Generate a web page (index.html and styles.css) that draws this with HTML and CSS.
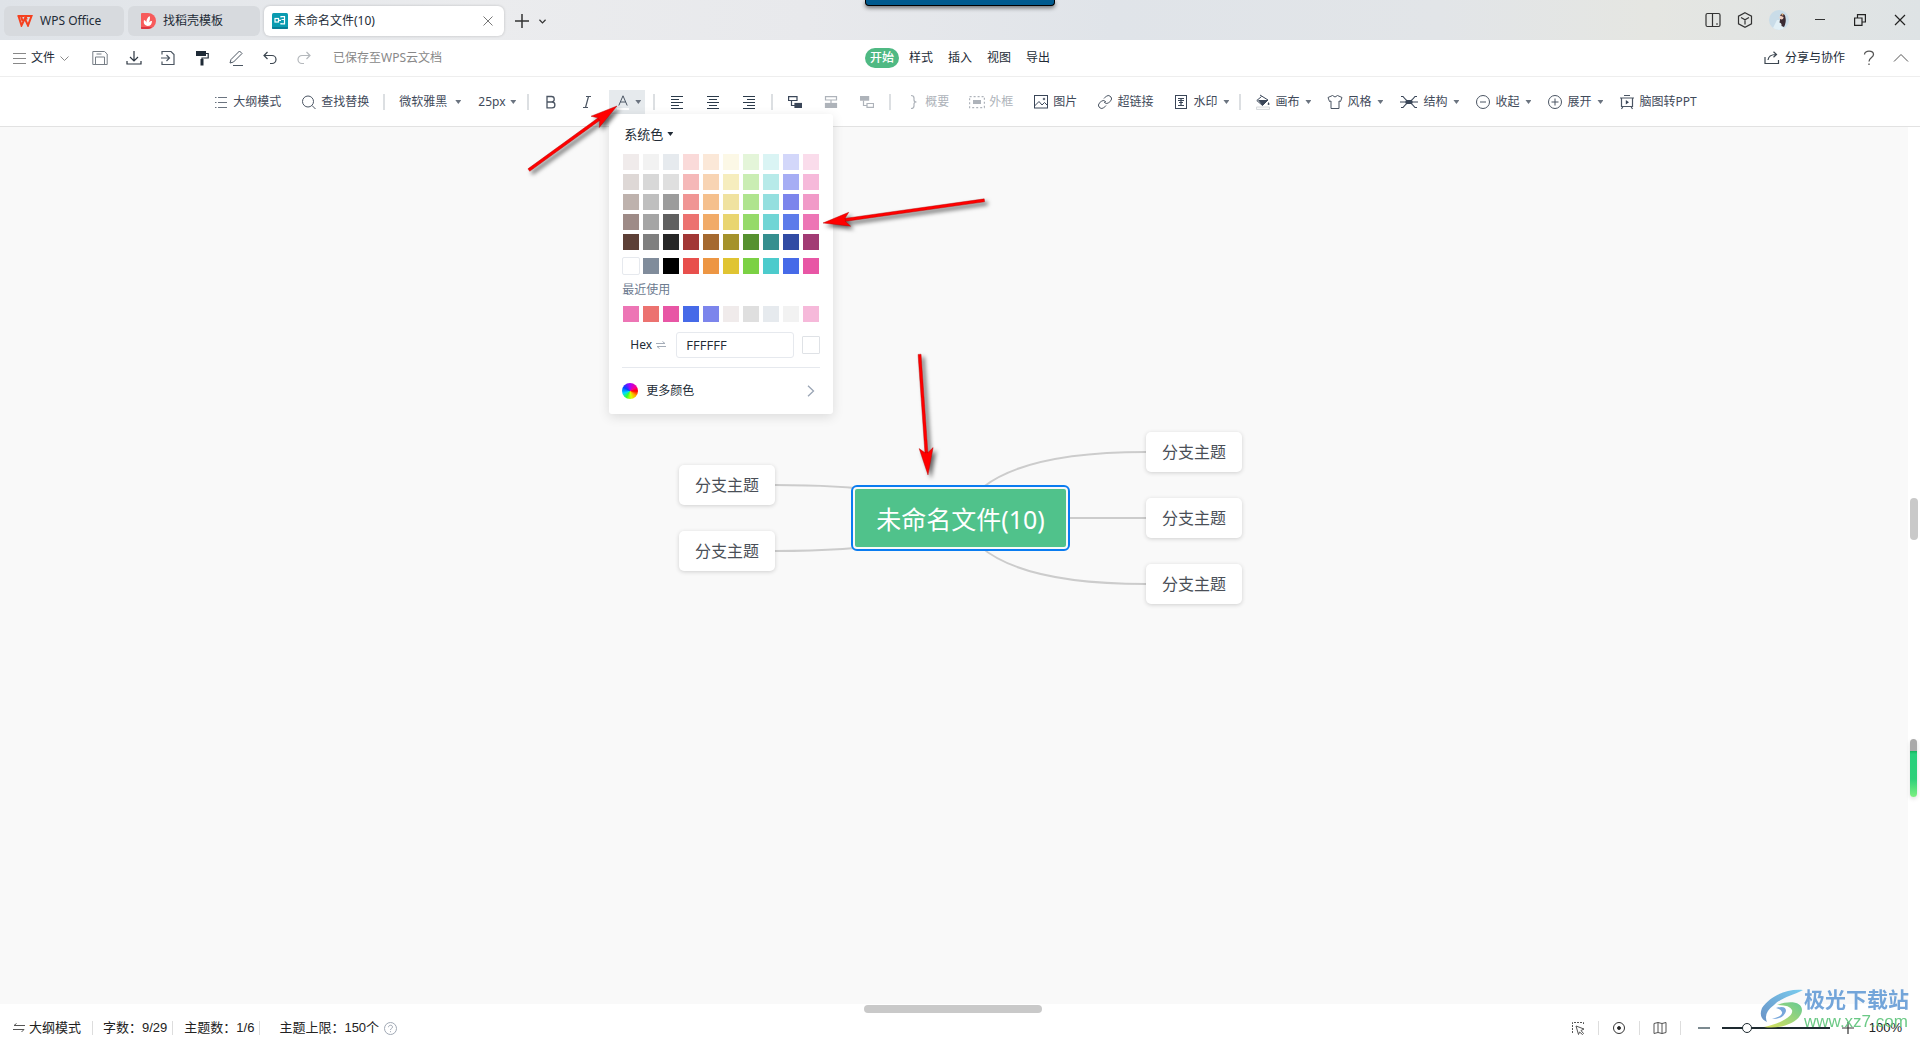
FILE: index.html
```html
<!DOCTYPE html>
<html lang="zh-CN">
<head>
<meta charset="utf-8">
<title>未命名文件(10) - WPS Office</title>
<link rel="stylesheet" href="styles.css">
</head>
<body>
<div class="app">
  <header class="titlebar">
    <div class="tabs">
      <button class="tab tab-home">
        <svg width="16" height="12" viewBox="0 0 16 12" fill="none" stroke="#f5401f" stroke-width="2"><path d="M0.5 1H7.5M1.500 1L4.500 10.500L7.800 3.500L11 10.500L14.500 1H8.500L9.800 4.500M4 1L5.500 6"/></svg>
        WPS Office
      </button>
      <button class="tab tab-template">
        <svg width="15" height="16" viewBox="0 0 15 16"><path d="M1 0H7A8 8 0 0 1 7 16H1Q0 16 0 15V1Q0 0 1 0Z" fill="#f75b5b"/><path d="M0 14H11Q9 16 7 16H1Q0 16 0 15Z" fill="#dc3540"/><path d="M6.500 13C2.500 12 2.500 9 3 7C4.500 7.500 5.500 8.500 5.500 10C5 7 6.500 4.500 8.500 3C9.500 5 9 7.500 7.500 10C8.500 8.500 9.500 8 11 8C11 11 9.500 13 6.500 13Z" fill="#fff"/></svg>
        找稻壳模板
      </button>
      <button class="tab tab-file active">
        <svg width="16" height="16" viewBox="0 0 16 16"><rect width="16" height="16" rx="1.500" fill="#0a9bb0"/><path d="M0 14H16V15Q16 16 15 16H1Q0 16 0 15Z" fill="#087d96"/><g fill="none" stroke="#fff" stroke-width="1.200"><rect x="3" y="5.500" width="3.500" height="3.500"/><path d="M6.500 7.300H9M9 3.600H12.500V6.500H9.500M9 10.800H12.500V6.500M9 3V4.500M9 10V11.500"/></g></svg>
        <span class="tab-name">未命名文件(10)</span>
        <svg width="10" height="10" viewBox="0 0 10 10" stroke="#777" fill="none"><path d="M.5.5L9.500 9.500M9.500.5L.5 9.500"/></svg>
      </button>
      <button class="new-tab" aria-label="新建">
        <svg width="14" height="14" viewBox="0 0 14 14" stroke="#333" stroke-width="1.500"><path d="M7 0V14M0 7H14"/></svg>
      </button>
      <button class="tab-list" aria-label="标签列表">
        <svg width="7" height="5" viewBox="0 0 8 5" stroke="#333" stroke-width="1.400" fill="none"><path d="M.5.5L4 4L7.500.5"/></svg>
      </button>
    </div>
    <div class="window-tools">
      <button class="win-btn" aria-label="分屏"><svg width="16" height="16" viewBox="0 0 16 16" fill="none" stroke="#333" stroke-width="1.200"><rect x="1" y="1.500" width="14" height="13" rx="1.500"/><path d="M7.500 1.500V14.500M11 12H13"/></svg></button>
      <button class="win-btn" aria-label="应用"><svg width="16" height="16" viewBox="0 0 16 16" fill="none" stroke="#333" stroke-width="1.200"><path d="M8 .8L14.500 4.200V11.800L8 15.200L1.500 11.800V4.200ZM4 5.500L8 7.700L12 5.500M8 7.700V12.500"/></svg></button>
      <button class="win-btn user" aria-label="账号"><svg width="20" height="20" viewBox="0 0 20 20"><defs><clipPath id="face"><circle cx="10" cy="10" r="10"/></clipPath></defs><g clip-path="url(#face)"><rect width="20" height="20" fill="#c9dce8"/><path d="M3 20L8 10L12 10L15 20Z" fill="#e2f0f6"/><path d="M12 4Q16 3 16.500 8Q17.500 12 15 17L12.500 16Q13 13 10.500 12.500Z" fill="#3a2b33"/><circle cx="12.500" cy="7.500" r="2" fill="#f0cfc0"/><path d="M11 5.500Q13 3 15.500 5.500L14.500 7Z" fill="#4a343a"/><circle cx="13.500" cy="4.500" r="1" fill="#e5b078"/></g></svg></button>
      <button class="win-btn wide" aria-label="最小化"><svg width="12" height="12" viewBox="0 0 12 12" stroke="#333"><path d="M1 5.500H11"/></svg></button>
      <button class="win-btn wide" aria-label="还原"><svg width="12" height="12" viewBox="0 0 12 12" fill="none" stroke="#222" stroke-width="1.200"><path d="M.6 4H8V11.400H.6ZM3.500 4V.6H11.400V8H8"/></svg></button>
      <button class="win-btn wide" aria-label="关闭"><svg width="12" height="12" viewBox="0 0 12 12" stroke="#222" stroke-width="1.200"><path d="M1 1L11 11M11 1L1 11"/></svg></button>
    </div>
    <div class="dock"></div>
  </header>

  <nav class="menubar">
    <div class="quick">
      <button class="file-menu">
        <svg width="13" height="12" viewBox="0 0 13 12" stroke="#888"><path d="M0 1.500H13M0 6.500H13M0 11.500H13"/></svg>
        文件
        <svg width="9" height="5" viewBox="0 0 9 5" stroke="#888" fill="none"><path d="M.5.5L4.500 4.500L8.500.5"/></svg>
      </button>
      <button class="quick-btn" aria-label="保存"><svg width="16" height="16" viewBox="0 0 16 16" fill="none" stroke="#777e86"><path d="M.8 1.500H12.500L15.200 4V14.500H.8ZM3.500 14.500V7H12.500V14.500M4.500 4H9.500"/></svg></button>
      <button class="quick-btn" aria-label="下载"><svg width="16" height="16" viewBox="0 0 16 16" fill="none" stroke="#2b3540" stroke-width="1.200"><path d="M8 1V10.500M4 7L8 11L12 7M1 11V14H15V11"/></svg></button>
      <button class="quick-btn" aria-label="导出"><svg width="16" height="16" viewBox="0 0 16 16" fill="none" stroke="#4c5662" stroke-width="1.200"><path d="M2 4.500V1.500H11L14 4.500V14.500H2V11.500M1 8H9M6.500 5L9.500 8L6.500 11"/></svg></button>
      <button class="quick-btn" aria-label="格式刷"><svg width="16" height="16" viewBox="0 0 16 16"><path d="M2 1H12V6H2Z" fill="#1e2a36"/><path d="M12 3.500H14.200V8H8V10" fill="none" stroke="#1e2a36" stroke-width="1.200"/><rect x="6.500" y="9" width="3" height="6.500" fill="#1e2a36"/></svg></button>
      <button class="quick-btn" aria-label="画笔"><svg width="16" height="16" viewBox="0 0 16 16" fill="none" stroke="#4c5662"><path d="M2 13L3 9.500L11.500 1L14 3.500L5.500 12L2 13M5 15.500H15"/></svg></button>
      <button class="quick-btn" aria-label="撤销"><svg width="14" height="14" viewBox="0 0 14 14" fill="none" stroke="#3c4650" stroke-width="1.200"><path d="M4.500 1L1 4.500L4.500 8M1 4.500H9A4 4 0 0 1 9 12.500H7"/></svg></button>
      <button class="quick-btn" aria-label="重做"><svg width="14" height="14" viewBox="0 0 14 14" fill="none" stroke="#b4b8bc" stroke-width="1.200"><path d="M9.500 1L13 4.500L9.500 8M13 4.500H5A4 4 0 0 0 5 12.500H7"/></svg></button>
      <span class="saved">已保存至WPS云文档</span>
    </div>
    <div class="sections">
      <button class="section current">开始</button>
      <button class="section">样式</button>
      <button class="section">插入</button>
      <button class="section">视图</button>
      <button class="section">导出</button>
    </div>
    <div class="share-area">
      <button class="share"><svg width="16" height="14" viewBox="0 0 16 14" fill="none" stroke="#3c4650" stroke-width="1.200"><path d="M1 6V12.500H14.500V9M4 9C4.500 5 7 3.500 12 3.500M9.500 .8L12.500 3.500L9.500 6.200"/></svg>分享与协作</button>
      <button class="share-icon" aria-label="帮助"><svg width="12" height="16" viewBox="0 0 12 16" fill="none" stroke="#555" stroke-width="1.300"><path d="M1.500 4.500C1.500 0 10.500 0 10.500 4.500C10.500 7.500 6 7.500 6 11.500M6 13.500V15"/></svg></button>
      <button class="share-icon fold" aria-label="收起功能区"><svg width="16" height="10" viewBox="0 0 16 10" fill="none" stroke="#555"><path d="M1 8.500L8 1.500L15 8.500"/></svg></button>
    </div>
  </nav>

  <div class="toolbar">
    <button class="tool"><svg width="16" height="16" viewBox="0 0 16 16" stroke="#6b7480"><path d="M5 3.500H14M5 8.500H14M5 13.500H14M2 3.500H3.500M2 8.500H3.500M2 13.500H3.500"/></svg>大纲模式</button>
    <button class="tool"><svg width="16" height="16" viewBox="0 0 16 16" fill="none" stroke="#4b5563"><circle cx="7" cy="7.500" r="5.500"/><path d="M11 11.500L14.500 15"/></svg>查找替换</button>
    <span class="rule"></span>
    <span class="pick"><select class="pick-font" aria-label="字体"><option>微软雅黑</option></select><i class="caret"></i></span>
    <span class="pick"><select class="pick-size" aria-label="字号"><option>25px</option></select><i class="caret"></i></span>
    <span class="rule"></span>
    <button class="icon-tool" aria-label="加粗"><svg width="16" height="16" viewBox="0 0 16 16" fill="none" stroke="#4b5563" stroke-width="1.300"><path d="M4 2.500H8.500A2.700 2.700 0 0 1 8.500 8H4ZM4 8H9A2.900 2.900 0 0 1 9 13.800H4Z"/></svg></button>
    <button class="icon-tool" aria-label="斜体"><svg width="16" height="16" viewBox="0 0 16 16" fill="none" stroke="#4b5563" stroke-width="1.200"><path d="M7 2.500H12M4 13.500H9M9.500 2.500L6.500 13.500"/></svg></button>
    <div class="color-tool">
      <button class="color-btn" aria-label="字体颜色"><span class="letter"><svg width="10" height="11" viewBox="0 0 10 11" fill="none" stroke="#4b5563"><path d="M.8 10.500L5 .8L9.200 10.500M2.300 7H7.700"/></svg></span><i class="caret"></i></button>
      <section class="palette">
        <button class="palette-head">系统色<i class="caret dark"></i></button>
        <div class="swatches">
          <button style="background:#f0ebeb"></button><button style="background:#f2f2f2"></button><button style="background:#e6eaee"></button><button style="background:#fadad9"></button><button style="background:#fbe8d8"></button><button style="background:#fcf8e6"></button><button style="background:#e4f5d9"></button><button style="background:#daf4f4"></button><button style="background:#d3d7fa"></button><button style="background:#fadceb"></button>
          <button style="background:#ded8d6"></button><button style="background:#d8d8d8"></button><button style="background:#dfdfdf"></button><button style="background:#f5b8b8"></button><button style="background:#f8d4b3"></button><button style="background:#f6edbe"></button><button style="background:#caedb3"></button><button style="background:#b7eae9"></button><button style="background:#a6adf4"></button><button style="background:#f6b9da"></button>
          <button style="background:#beb2ad"></button><button style="background:#bfbfbf"></button><button style="background:#9c9c9c"></button><button style="background:#f09594"></button><button style="background:#f5c08d"></button><button style="background:#f0e2a0"></button><button style="background:#afe48e"></button><button style="background:#94dfdf"></button><button style="background:#7c85ec"></button><button style="background:#f19ac8"></button>
          <button style="background:#9e8b87"></button><button style="background:#a5a5a5"></button><button style="background:#606060"></button><button style="background:#ec7270"></button><button style="background:#f1ab68"></button><button style="background:#e9d570"></button><button style="background:#95da69"></button><button style="background:#70d5d5"></button><button style="background:#5d7bea"></button><button style="background:#ed75b5"></button>
          <button style="background:#5d4037"></button><button style="background:#7f7f7f"></button><button style="background:#262626"></button><button style="background:#a23735"></button><button style="background:#a5692f"></button><button style="background:#a5922b"></button><button style="background:#56912f"></button><button style="background:#358f8f"></button><button style="background:#314ba4"></button><button style="background:#a23b74"></button>
        </div>
        <div class="swatches standard">
          <button class="white"></button><button style="background:#808c9b"></button><button style="background:#000"></button><button style="background:#e84f4c"></button><button style="background:#ed9643"></button><button style="background:#e0c432"></button><button style="background:#7bd144"></button><button style="background:#4ccbcc"></button><button style="background:#466ae8"></button><button style="background:#e856a5"></button>
        </div>
        <p class="recent-title">最近使用</p>
        <div class="swatches">
          <button style="background:#ed75b5"></button><button style="background:#ec7270"></button><button style="background:#e856a5"></button><button style="background:#466ae8"></button><button style="background:#7c85ec"></button><button style="background:#f0ebeb"></button><button style="background:#dfdfdf"></button><button style="background:#e6eaee"></button><button style="background:#f2f2f2"></button><button style="background:#f6b9da"></button>
        </div>
        <div class="hex-row">
          <label for="hex">Hex <svg width="10" height="8" viewBox="0 0 10 8" fill="none" stroke="#a5adb8"><path d="M0 2.500H9L6.500.5M10 5.500H1L3.500 7.500"/></svg></label>
          <input id="hex" type="text" value="FFFFFF">
          <span class="preview"></span>
        </div>
        <button class="more"><i class="wheel"></i><span>更多颜色</span><svg width="8" height="12" viewBox="0 0 8 12" fill="none" stroke="#9aa5b5" stroke-width="1.300"><path d="M1 .8L6.500 6L1 11.200"/></svg></button>
      </section>
    </div>
    <span class="rule"></span>
    <button class="icon-tool" aria-label="左对齐"><svg width="12" height="14" viewBox="0 0 12 14" stroke="#2b3a4a"><path d="M0 1.500H12M0 4.500H8M0 7.500H12M0 10.500H8M0 13.500H12"/></svg></button>
    <button class="icon-tool" aria-label="居中"><svg width="12" height="14" viewBox="0 0 12 14" stroke="#2b3a4a"><path d="M0 1.500H12M2 4.500H10M0 7.500H12M2 10.500H10M0 13.500H12"/></svg></button>
    <button class="icon-tool" aria-label="右对齐"><svg width="12" height="14" viewBox="0 0 12 14" stroke="#2b3a4a"><path d="M0 1.500H12M4 4.500H12M0 7.500H12M4 10.500H12M0 13.500H12"/></svg></button>
    <span class="rule"></span>
    <button class="icon-tool" aria-label="子主题"><svg width="14" height="12" viewBox="0 0 14 12" fill="none" stroke="#3a4658" stroke-width="1.200"><path d="M.6.600H9V4.500H.6ZM3.500 4.500V9.500H7"/><rect x="7" y="7.500" width="6.500" height="4" fill="#3a4658"/></svg></button>
    <button class="icon-tool" aria-label="同级主题"><svg width="14" height="12" viewBox="0 0 14 12" fill="none" stroke="#aeb3ba" stroke-width="1.200"><path d="M1.500.600H12.500V4H1.500ZM7 4V8"/><rect x="1.500" y="7.500" width="11" height="4" fill="#aeb3ba"/></svg></button>
    <button class="icon-tool" aria-label="父主题"><svg width="14" height="12" viewBox="0 0 14 12" fill="none" stroke="#aeb3ba" stroke-width="1.200"><path d="M3.500 4.500V9.500H7M7 7.500H13.500V11.400H7Z"/><rect x=".6" y=".6" width="8" height="3.500" fill="#aeb3ba"/></svg></button>
    <span class="rule"></span>
    <button class="tool" disabled><svg width="16" height="16" viewBox="0 0 16 16" fill="none" stroke="#aeb3ba" stroke-width="1.200"><path d="M6 1.500Q9 1.500 9 4V6Q9 8 11.500 8Q9 8 9 10V12Q9 14.500 6 14.500"/></svg>概要</button>
    <button class="tool" disabled><svg width="16" height="16" viewBox="0 0 16 16" fill="none" stroke="#aeb3ba" stroke-width="1.200"><rect x=".6" y="2.600" width="14.800" height="11" stroke-dasharray="2 2"/><rect x="4" y="6" width="8" height="4" fill="#aeb3ba" stroke="none"/></svg>外框</button>
    <button class="tool"><svg width="16" height="16" viewBox="0 0 16 16" fill="none" stroke="#3a4658"><rect x="1.500" y="1.500" width="13" height="12.500"/><path d="M1.500 12L6 7.500L9 11L11.500 8.500L14.500 11.500"/><circle cx="11" cy="5" r=".8"/></svg>图片</button>
    <button class="tool"><svg width="16" height="16" viewBox="0 0 16 16" fill="none" stroke="#4b5563"><path d="M7 4.500L9.500 2Q12 .5 14 3Q15.500 5 13.500 7L11.500 9Q9 10.500 7 8M9 11.500L6.500 14Q4 15.500 2 13Q.5 11 2.500 9L4.500 7Q7 5.500 9 8"/></svg>超链接</button>
    <button class="tool drop"><svg width="16" height="16" viewBox="0 0 16 16" fill="none" stroke="#3a4658"><rect x="2.500" y="1.500" width="11" height="13"/><path d="M5 4.500H11M5 6.500H11M6 8.500H10M5 11.500H11M8 4V11" stroke-width="1.200"/></svg>水印<i class="caret"></i></button>
    <span class="rule"></span>
    <button class="tool drop"><svg width="16" height="16" viewBox="0 0 16 16"><path d="M3 6H13L7.500 11.500Z" fill="#3a4658"/><path d="M5 1L13 6L7.500 11.500L1.800 6.500L6.500 2.500" fill="none" stroke="#3a4658"/><path d="M13.500 8Q15.500 11 13.500 11Q11.800 11 13.500 8Z" fill="#3a4658"/><path d="M1.500 13H14.500V15.500H1.500Z" fill="#f9f9f9" stroke="#d8dbde"/></svg>画布<i class="caret"></i></button>
    <button class="tool drop"><svg width="16" height="16" viewBox="0 0 16 16" fill="none" stroke="#4b5563"><path d="M5.500 1.500Q8 4.500 10.500 1.500L15 3.500L13.500 7.500L12 7V14.500H4V7L2.500 7.500L1 3.500Z"/></svg>风格<i class="caret"></i></button>
    <button class="tool drop"><svg width="20" height="16" viewBox="0 0 20 16" fill="none" stroke="#3a4658" stroke-width="1.200"><path d="M2 2.500H4Q8 7.500 10 7.500T16 2.500H18M2 13.500H4Q8 8.500 10 8.500T16 13.500H18M1 8H19"/><rect x="7" y="6.500" width="6" height="3" rx="1" fill="#3a4658"/></svg>结构<i class="caret"></i></button>
    <button class="tool drop"><svg width="16" height="16" viewBox="0 0 16 16" fill="none" stroke="#4b5563"><circle cx="8" cy="8" r="6.500"/><path d="M5 8H11"/></svg>收起<i class="caret"></i></button>
    <button class="tool drop"><svg width="16" height="16" viewBox="0 0 16 16" fill="none" stroke="#4b5563"><circle cx="8" cy="8" r="6.500"/><path d="M4.500 8H11.500M8 4.500V11.500"/></svg>展开<i class="caret"></i></button>
    <button class="tool"><svg width="16" height="16" viewBox="0 0 16 16" fill="none" stroke="#4b5563" stroke-width="1.200"><path d="M5 1.500H11M1 4H15M2.500 4V12.500H13.500V4M4 12.500L2.500 15M12 12.500L13.500 15"/><path d="M6.800 6L10 8.300L6.800 10.600Z" fill="#3a4658" stroke="none"/></svg>脑图转PPT</button>
  </div>

  <main class="workspace">
    <div class="canvas">
      <div class="map">
        <svg class="links" width="564" height="172" viewBox="0 0 564 172" fill="none" stroke="#ccc" stroke-width="2">
          <path d="M281 86Q305 20 467 20M281 86H467M281 86Q305 152 467 152M281 86Q246 53 96 53M281 86Q246 119 96 119"/>
        </svg>
        <div class="node left upper">分支主题</div>
        <div class="node left lower">分支主题</div>
        <div class="root">未命名文件(10)</div>
        <div class="node right first">分支主题</div>
        <div class="node right second">分支主题</div>
        <div class="node right third">分支主题</div>
      </div>
    </div>
    <div class="gutter"><i class="vthumb"></i><i class="meter"></i></div>
  </main>

  <footer class="status">
    <i class="hthumb"></i>
    <button class="status-item first"><svg width="12" height="10" viewBox="0 0 12 10" fill="none" stroke="#555"><path d="M12 2.500H1L3.500.5M0 6.500H11L8.500 9"/></svg>大纲模式</button>
    <span class="status-item count">字数：9/29</span>
    <span class="status-item topics">主题数：1/6</span>
    <span class="status-item limit">主题上限：150个<svg width="13" height="13" viewBox="0 0 13 13" fill="none" stroke="#a0a8b4"><circle cx="6.500" cy="6.500" r="6"/><path d="M4.500 5.200C4.500 2.600 8.500 2.600 8.500 5C8.500 6.500 6.500 6.300 6.500 8M6.500 9.200V10.200"/></svg></span>
    <div class="view-tools">
      <button class="view-btn" aria-label="框选"><svg width="14" height="14" viewBox="0 0 14 14" fill="none" stroke="#555"><path d="M1.500 12V1.500H12.500V4" stroke-dasharray="2 1"/><path d="M5 5L13 8L10 9.500L12.500 12.500L11.500 13.500L8.500 11L7.500 13.500Z"/></svg></button>
      <button class="view-btn" aria-label="定位"><svg width="14" height="14" viewBox="0 0 14 14" fill="none" stroke="#333"><circle cx="7" cy="7" r="5.500"/><circle cx="7" cy="7" r="1.500" fill="#222"/></svg></button>
      <button class="view-btn" aria-label="导航"><svg width="14" height="14" viewBox="0 0 14 14" fill="none" stroke="#555"><path d="M1 2.500L5 1.500L9 2.500L13 1.500V11.500L9 12.500L5 11.500L1 12.500ZM5 1.500V11.500M9 2.500V12.500"/></svg></button>
      <button class="zoom-btn" aria-label="缩小"><svg width="12" height="12" viewBox="0 0 12 12" stroke="#7c8a90" stroke-width="2"><path d="M0 6H12"/></svg></button>
      <input class="zoom" type="range" min="0" max="100" value="21" aria-label="缩放">
      <button class="zoom-btn" aria-label="放大"><svg width="12" height="12" viewBox="0 0 12 12" stroke="#333" stroke-width="1.200"><path d="M0 6H12M6 0V12"/></svg></button>
      <span class="percent">100%</span>
    </div>
    <div class="brand">
      <svg width="44" height="42" viewBox="0 0 44 42">
        <defs><linearGradient id="sky" x1="0" y1="1" x2="1" y2="0"><stop offset="0" stop-color="#5a86c0"/><stop offset="1" stop-color="#6cc8ee"/></linearGradient><linearGradient id="leaf" x1="0" y1="1" x2="1" y2="0"><stop offset="0" stop-color="#d9e04c"/><stop offset="1" stop-color="#55c488"/></linearGradient></defs>
        <path d="M43 2C28 0 10 8 2 20Q-2 30 7 34Q3 25 14 17C22 9 32 8 43 2Z" fill="url(#sky)"/>
        <path d="M17 17C30 12 42 14 42 22C42 32 24 42 4 39C20 36 34 28 32 22Q30 17 17 17Z" fill="url(#leaf)"/>
        <path d="M16 20Q26 17 26 23Q24 31 12 31Q23 28 22 24Q21 21 16 20Z" fill="#6a9ed8"/>
      </svg>
      <div><div class="brand-name">极光下载站</div><div class="brand-url">www.xz7.com</div></div>
    </div>
  </footer>

  <svg class="marks" width="480" height="400" viewBox="520 90 480 400">
    <defs><g id="head"><path d="M0 0L-27 7L-22 1H-23V-1H-22L-27 -7Z"/></g></defs>
    <g fill="#f00" stroke="#b00000" stroke-width=".4"><g transform="translate(617 106) rotate(-36)"><path d="M-109 -1.500H-20V1.500H-109Z"/><use href="#head"/></g>
    <g transform="translate(823 223) rotate(172)"><path d="M-163 -1.500H-20V1.500H-163Z"/><use href="#head"/></g>
    <g transform="translate(928 475) rotate(86)"><path d="M-121 -1.500H-20V1.500H-121Z"/><use href="#head"/></g></g>
  </svg>
</div>
</body>
</html>
```
FILE: styles.css
```css
* { box-sizing: border-box; }
body {
  margin: 0;
  font: 12px/16px "Noto Sans", "Noto Sans CJK SC", sans-serif;
  color: #222b36;
}
button, select, input {
  font: inherit;
  color: inherit;
  border: 0;
  padding: 0;
  margin: 0;
  background: none;
}
button { display: flex; align-items: center; white-space: nowrap; }
svg { display: block; flex: none; }
i { display: block; flex: none; }

.app {
  position: relative;
  display: flex;
  flex-direction: column;
  min-height: 100vh;
  overflow: hidden;
  background: #fff;
}

/* title bar */
.titlebar {
  position: relative;
  display: flex;
  justify-content: space-between;
  height: 40px;
  background: linear-gradient(90deg, #dfe3e8, #ebecee 25%, #e8e9ec 42%, #e0e4e9 58%, #e2e5e8 75%, #e5e6e2 86%, #dee3e5);
}
.tabs { display: flex; align-items: center; gap: 4px; padding: 2px 4px 0; }
.tab {
  height: 30px;
  gap: 7px;
  border-radius: 6px;
  background: #d7dade;
}
.tab-home { width: 120px; padding-left: 13px; }
.tab-template { width: 132px; padding-left: 13px; }
.tab-file { width: 240px; padding: 0 11px 0 8px; gap: 6px; }
.tab.active { background: #fff; box-shadow: 0 0 3px #0003; }
.tab-name { flex: 1; text-align: left; }
.new-tab { padding: 0 3px 0 7px; }
.tab-list { padding: 0 3px; }
.window-tools { display: flex; align-items: center; }
.win-btn { width: 32px; height: 32px; justify-content: center; }
.win-btn.user { width: 36px; margin-right: 3px; }
.win-btn.wide { width: 40px; }
.dock {
  position: absolute;
  top: 0;
  left: 50%;
  width: 190px;
  height: 6px;
  margin-left: -95px;
  background: #005a8e;
  border: 1px solid #000;
  border-top: 0;
  border-radius: 0 0 4px 4px;
  box-shadow: 0 2px 4px #0008;
}

/* menu bar */
.menubar {
  display: grid;
  grid-template-columns: 1fr auto 1fr;
  align-items: center;
  height: 37px;
  border-bottom: 1px solid #eee;
}
.quick { display: flex; align-items: center; }
.file-menu { width: 83px; padding-left: 13px; gap: 5px; }
.quick-btn { width: 34px; height: 30px; justify-content: center; }
.saved { padding-left: 12px; color: #888; }
.sections { display: flex; gap: 5px; }
.section { width: 34px; height: 20px; justify-content: center; border-radius: 10px; }
.section.current { background: #4fb983; color: #fff; font-weight: 500; }
.share-area { display: flex; align-items: center; justify-content: flex-end; padding-right: 11px; }
.share { gap: 5px; }
.share-icon { margin-left: 18px; }

/* tool bar */
.toolbar {
  display: flex;
  align-items: center;
  justify-content: center;
  height: 50px;
  padding: 1px 10px 0 0;
  border-bottom: 1px solid #e2e2e2;
  color: #3f4a5a;
}
.tool { gap: 4px; height: 24px; padding: 0 10px; }
.tool.drop { padding-right: 6px; }
.tool:disabled { color: #aeb3ba; }
.rule { width: 2px; height: 16px; margin: 0 4px; background: #dcdfe2; }
.caret {
  width: 6px;
  height: 4px;
  margin-left: 2px;
  background: #6b7480;
  clip-path: polygon(0 0, 100% 0, 50% 100%);
}
.caret.dark { background: #222b36; margin-left: 4px; }
.pick { display: flex; align-items: center; padding: 0 7px 0 10px; }
.pick select { appearance: none; }
.pick-font { width: 54px; }
.pick-size { width: 30px; }
.icon-tool { width: 36px; height: 24px; justify-content: center; }
.color-tool { position: relative; margin: 0 4px; }
.color-btn { width: 36px; height: 24px; padding-left: 8px; gap: 4px; background: #e6eaed; }
.letter { display: block; width: 12px; padding-left: 1px; border-bottom: 2px solid #fff; padding-bottom: 2px; }

/* colour palette */
.palette {
  position: absolute;
  z-index: 5;
  top: 24px;
  left: 0;
  width: 224px;
  height: 300px;
  padding: 0 13px;
  border-radius: 3px;
  background: #fff;
  box-shadow: 0 3px 12px #0000001f;
  color: #222b36;
}
.palette-head { height: 40px; padding-left: 2px; font-size: 13px; }
.swatches { display: grid; grid-template-columns: repeat(10, 16px); gap: 4px; padding-left: 1px; }
.swatches button { height: 16px; }
.swatches .white { background: #fff; outline: 1px solid #e6e9ee; border-radius: 1px; }
.swatches.standard { margin-top: 8px; }
.recent-title { margin: 0; line-height: 32px; color: #6d7b8f; }
.hex-row { display: flex; align-items: center; margin-top: 10px; padding-bottom: 9px; border-bottom: 1px solid #e6e9ee; }
.hex-row label { display: flex; align-items: center; gap: 4px; width: 54px; padding-left: 8px; }
.hex-row input { width: 118px; height: 26px; padding: 0 9px; border: 1px solid #e6e9ee; border-radius: 3px; font-family: "Open Sans", sans-serif; font-size: 13px; }
.preview { width: 18px; height: 18px; margin-left: 8px; border: 1px solid #dfe2e6; border-radius: 1px; }
.more { width: 100%; height: 46px; gap: 8px; padding-right: 5px; }
.more span { flex: 1; text-align: left; }
.wheel {
  width: 16px;
  height: 16px;
  border-radius: 50%;
  background: conic-gradient(#a0f, #f08 60deg, #f00 90deg, #fa0 130deg, #df0 170deg, #3f3 210deg, #0df 250deg, #04f 300deg, #a0f);
}

/* mind map */
.workspace { display: flex; flex: 1; }
.canvas { position: relative; flex: 1; background: #f9f9f9; }
.map { position: absolute; left: 679px; top: 305px; width: 564px; height: 172px; }
.links { position: absolute; }
.node {
  position: absolute;
  width: 96px;
  border-radius: 5px;
  background: #fff;
  box-shadow: 0 1px 4px #0000002b;
  color: #4a4f57;
  font-size: 16px;
  line-height: 40px;
  text-align: center;
}
.left { left: 0; }
.right { left: 467px; }
.upper { top: 33px; }
.lower { top: 99px; }
.first { top: 0; }
.second { top: 66px; }
.third { top: 132px; }
.root {
  position: absolute;
  left: 172px;
  top: 53px;
  width: 219px;
  height: 66px;
  padding: 2px;
  border: 2px solid #0a7cf0;
  border-radius: 6px;
  background: linear-gradient(#50c28b, #50c28b) content-box, #f9f9f9;
  color: #fff;
  font-size: 25px;
  line-height: 60px;
  text-align: center;
}
.gutter { position: relative; width: 12px; }
.vthumb { position: absolute; left: 2px; top: 371px; width: 8px; height: 42px; border-radius: 4px; background: #c9c9c9; }
.meter {
  position: absolute;
  left: 2px;
  top: 612px;
  width: 7px;
  height: 58px;
  border-radius: 4px;
  background: linear-gradient(#aaa 12px, #12b25c 12px, #26d07c 15px, #2dd07a 40px, #7df081);
  box-shadow: 0 2px 4px #0002;
}

/* status bar */
.status {
  position: relative;
  display: flex;
  align-items: center;
  height: 36px;
  padding: 12px 18px 0 13px;
  font: 13px/16px "Liberation Sans", "Noto Sans CJK SC", sans-serif;
  color: #222;
}
.hthumb {
  position: absolute;
  top: 1px;
  left: 50%;
  width: 178px;
  height: 8px;
  margin-left: -96px;
  border-radius: 4px;
  background: #c9c9c9;
}
.status-item { display: flex; gap: 4px; align-items: center; height: 14px; padding-right: 5px; border-right: 1px solid #ddd; white-space: nowrap; }
.status-item.first { padding-right: 11px; }
.count { padding-left: 10px; }
.topics { padding-left: 11px; }
.limit { padding-left: 19px; border: 0; gap: 5px; }
.view-tools { display: flex; align-items: center; margin-left: auto; }
.view-btn { width: 41px; height: 14px; justify-content: center; border-right: 1px solid #ddd; }
.zoom-btn { width: 12px; margin: 0 12px 0 17px; }
.zoom { width: 108px; height: 12px; appearance: none; }
.zoom::-webkit-slider-runnable-track { height: 2px; background: #1e2a30; }
.zoom::-webkit-slider-thumb {
  appearance: none;
  width: 10px;
  height: 10px;
  margin-top: -4px;
  border: 1px solid #1e2a30;
  border-radius: 50%;
  background: #fff;
}
.zoom + .zoom-btn { margin: 0 15px 0 12px; }
.brand {
  position: absolute;
  right: 10px;
  bottom: 8px;
  display: flex;
  width: 150px;
  opacity: 0.9;
  pointer-events: none;
}
.brand-name { color: #659cd6; font-size: 21px; line-height: 24px; font-weight: 700; white-space: nowrap; }
.brand-url { color: #5cc479; font-size: 17px; line-height: 20px; font-weight: 500; }

/* annotation arrows */
.marks {
  position: absolute;
  z-index: 10;
  left: 520px;
  top: 90px;
  pointer-events: none;
  filter: drop-shadow(3px 3px 2px #0009);
}
```
